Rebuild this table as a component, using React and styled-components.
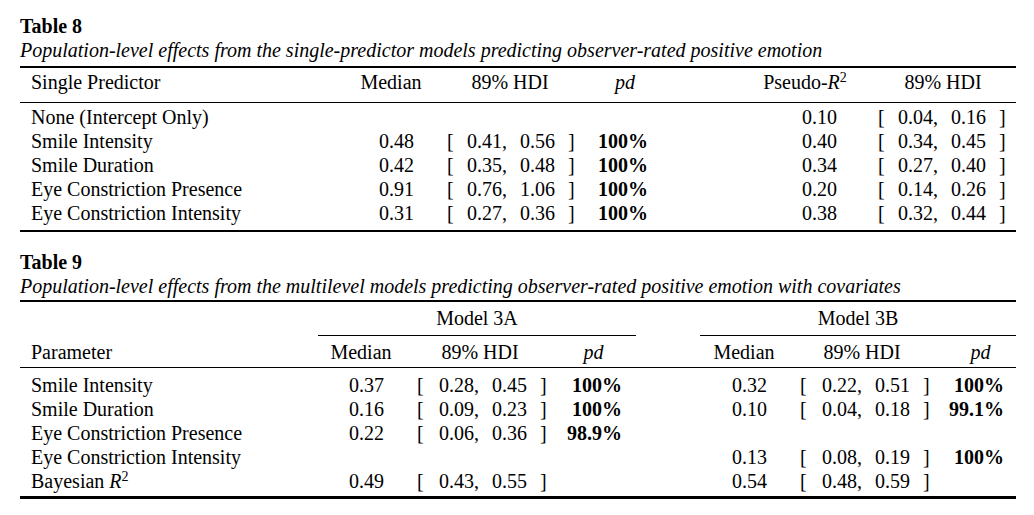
import React from "react";
import styled, { createGlobalStyle } from "styled-components";

const GlobalStyle = createGlobalStyle`
  html, body { margin: 0; padding: 0; background: #fff; }
  body {
    font-family: "Liberation Serif", "Times New Roman", serif;
    color: #000;
  }
`;

const Page = styled.div`
  width: 996px;
  padding: 14px 0 0 20px;
  font-size: 20px;
  line-height: 24px;
`;

const Block = styled.section`
  margin-bottom: ${(p) => p.$after || 0}px;
`;

const Title = styled.div`
  font-weight: bold;
  height: 24px;
`;

const Caption = styled.div`
  font-style: italic;
  height: 24px;
`;

const Rule = styled.div`
  height: ${(p) => p.$weight}px;
  background: #000;
  margin-top: ${(p) => p.$above || 0}px;
`;

const Row = styled.div`
  display: grid;
  grid-template-columns: ${(p) => p.$cols};
  height: ${(p) => p.$h || 24}px;
  margin-top: ${(p) => p.$above || 0}px;
  white-space: nowrap;
`;

const Body = styled.div`
  margin-top: ${(p) => p.$above}px;
`;

const Label = styled.div`
  padding-left: 11px;
`;

const Head = styled.div`
  text-align: center;
  grid-column: ${(p) => p.$span || "auto"};
  padding-left: ${(p) => p.$pl || 0}px;
  padding-right: ${(p) => p.$pr || 0}px;
`;

const Num = styled.div`
  text-align: right;
  padding-right: ${(p) => p.$pr}px;
`;

const Pd = styled(Num)`
  font-weight: bold;
`;

const Interval = styled.div`
  display: flex;
  padding-left: ${(p) => p.$offset}px;
`;

const Bracket = styled.span`
  width: 7px;
  margin-left: ${(p) => p.$gap || 0}px;
`;

const Bound = styled.span`
  width: ${(p) => p.$w}px;
  text-align: right;
`;

const Italic = styled.i`
  font-style: italic;
`;

const Sup = styled.span`
  font-size: 14px;
  line-height: 0;
  vertical-align: 7px;
`;

const CMid = styled.div`
  grid-column: ${(p) => p.$span};
  height: 1px;
  background: #000;
`;

const Blank = styled.div``;

const Hdi = ({ lo, hi, offset, loW }) => (
  <Interval $offset={offset}>
    <Bracket>[</Bracket>
    <Bound $w={loW}>{lo},</Bound>
    <Bound $w={48}>{hi}</Bound>
    <Bracket $gap={13}>]</Bracket>
  </Interval>
);

const R2 = () => (
  <>
    <Italic>R</Italic>
    <Sup>2</Sup>
  </>
);

// Table 8
const COLS8 = "332px 78px 160px 70px 80px 130px 146px";
const rows8 = [
  { name: "None (Intercept Only)", r2: ["0.10", "0.04", "0.16"] },
  { name: "Smile Intensity", m: ["0.48", "0.41", "0.56", "100%"], r2: ["0.40", "0.34", "0.45"] },
  { name: "Smile Duration", m: ["0.42", "0.35", "0.48", "100%"], r2: ["0.34", "0.27", "0.40"] },
  { name: "Eye Constriction Presence", m: ["0.91", "0.76", "1.06", "100%"], r2: ["0.20", "0.14", "0.26"] },
  { name: "Eye Constriction Intensity", m: ["0.31", "0.27", "0.36", "100%"], r2: ["0.38", "0.32", "0.44"] },
];

// Table 9
const COLS9 = "298px 86px 152px 80px 64px 88px 148px 80px";
const rows9 = [
  { name: "Smile Intensity", a: ["0.37", "0.28", "0.45", "100%"], b: ["0.32", "0.22", "0.51", "100%"] },
  { name: "Smile Duration", a: ["0.16", "0.09", "0.23", "100%"], b: ["0.10", "0.04", "0.18", "99.1%"] },
  { name: "Eye Constriction Presence", a: ["0.22", "0.06", "0.36", "98.9%"] },
  { name: "Eye Constriction Intensity", b: ["0.13", "0.08", "0.19", "100%"] },
  { name: <>Bayesian <R2 /></>, a: ["0.49", "0.43", "0.55", ""], b: ["0.54", "0.48", "0.59", ""] },
];

const ModelCells = ({ v, medPr, offset, pdPr }) =>
  v ? (
    <>
      <Num $pr={medPr}>{v[0]}</Num>
      <Hdi lo={v[1]} hi={v[2]} offset={offset} loW={55} />
      <Pd $pr={pdPr}>{v[3]}</Pd>
    </>
  ) : (
    <>
      <Blank />
      <Blank />
      <Blank />
    </>
  );

export default function App() {
  return (
    <Page>
      <GlobalStyle />
      <Block $after={18}>
        <Title>Table 8</Title>
        <Caption>
          Population-level effects from the single-predictor models predicting observer-rated positive emotion
        </Caption>
        <Rule $weight={2} $above={4} />
        <Row $cols={COLS8} $above={2}>
          <Label>Single Predictor</Label>
          <Head>Median</Head>
          <Head>89% HDI</Head>
          <Head>
            <Italic>pd</Italic>
          </Head>
          <Blank />
          <Head>
            Pseudo-<R2 />
          </Head>
          <Head>89% HDI</Head>
        </Row>
        <Rule $weight={1} $above={8} />
        <Body $above={2}>
          {rows8.map((r, i) => (
            <Row key={i} $cols={COLS8}>
              <Label>{r.name}</Label>
              {r.m ? (
                <>
                  <Num $pr={16}>{r.m[0]}</Num>
                  <Hdi lo={r.m[1]} hi={r.m[2]} offset={17} loW={53} />
                  <Pd $pr={12}>{r.m[3]}</Pd>
                </>
              ) : (
                <>
                  <Blank />
                  <Blank />
                  <Blank />
                </>
              )}
              <Blank />
              <Num $pr={33}>{r.r2[0]}</Num>
              <Hdi lo={r.r2[1]} hi={r.r2[2]} offset={8} loW={53} />
            </Row>
          ))}
        </Body>
        <Rule $weight={2} $above={5} />
      </Block>

      <Block>
        <Title>Table 9</Title>
        <Caption>
          Population-level effects from the multilevel models predicting observer-rated positive emotion with covariates
        </Caption>
        <Rule $weight={2} $above={2} />
        <Row $cols={COLS9} $above={4}>
          <Blank />
          <Head $span="2 / 5">Model 3A</Head>
          <Blank />
          <Head $span="6 / 9">Model 3B</Head>
        </Row>
        <Row $cols={COLS9} $above={5} $h={1}>
          <CMid $span="2 / 5" />
          <CMid $span="6 / 9" />
        </Row>
        <Row $cols={COLS9} $above={4}>
          <Label>Parameter</Label>
          <Head>Median</Head>
          <Head>89% HDI</Head>
          <Head $pr={5}>
            <Italic>pd</Italic>
          </Head>
          <Blank />
          <Head>Median</Head>
          <Head>89% HDI</Head>
          <Head $pl={9}>
            <Italic>pd</Italic>
          </Head>
        </Row>
        <Rule $weight={1} $above={3} />
        <Body $above={5}>
          {rows9.map((r, i) => (
            <Row key={i} $cols={COLS9}>
              <Label>{r.name}</Label>
              <ModelCells v={r.a} medPr={20} offset={13} pdPr={14} />
              <Blank />
              <ModelCells v={r.b} medPr={21} offset={12} pdPr={12} />
            </Row>
          ))}
        </Body>
        <Rule $weight={3} $above={3} />
      </Block>
    </Page>
  );
}
